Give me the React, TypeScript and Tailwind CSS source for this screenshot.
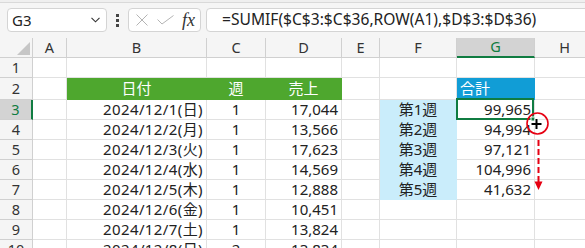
import React from "react";

const W = ["w-[33px]", "w-[34px]", "w-[140px]", "w-[59px]", "w-[76px]", "w-[38px]", "w-[77px]", "w-[78px]", "w-[60px]"];

type C = { t?: string; a?: "l" | "c" | "r"; cls?: string; x?: string };

const rows: { n: number; h: string; cells: C[] }[] = [
  { n: 1, h: "h-[20px]", cells: [{}, {}, {}, {}, {}, {}, {}, {}] },
  {
    n: 2,
    h: "h-[22px]",
    cells: [
      {},
      { t: "日付", a: "c", cls: "bg-[#4ea72e] border-[#4ea72e] text-white" },
      { t: "週", a: "c", cls: "bg-[#4ea72e] border-[#4ea72e] text-white" },
      { t: "売上", a: "c", cls: "bg-[#4ea72e] border-[#4ea72e] text-white" },
      {},
      {},
      { t: "合計", a: "l", cls: "bg-[#119dd6] border-[#119dd6] text-white" },
      {},
    ],
  },
  ...[
    ["2024/12/1(日)", "1", "17,044", "第1週", "99,965"],
    ["2024/12/2(月)", "1", "13,566", "第2週", "94,994"],
    ["2024/12/3(火)", "1", "17,623", "第3週", "97,121"],
    ["2024/12/4(水)", "1", "14,569", "第4週", "104,996"],
    ["2024/12/5(木)", "1", "12,888", "第5週", "41,632"],
    ["2024/12/6(金)", "1", "10,451", "", ""],
    ["2024/12/7(土)", "1", "13,824", "", ""],
    ["2024/12/8(日)", "2", "13,834", "", ""],
  ].map((r, i) => ({
    n: i + 3,
    h: "h-[20px]",
    cells: [
      {},
      { t: r[0], a: "r" as const, x: "tracking-[0.4px]" },
      { t: r[1], a: "c" as const },
      { t: r[2], a: "r" as const },
      {},
      r[3]
        ? { t: r[3], a: "c" as const, cls: "bg-[#caedfb] border-[#caedfb] text-[#222]" }
        : {},
      { t: r[4], a: "r" as const },
      {},
    ],
  })),
];

const cols = ["A", "B", "C", "D", "E", "F", "G", "H"];

export default function App() {
  return (
    <div className="relative w-[585px] h-[248px] overflow-hidden bg-[#f5f5f5] font-['Noto_Sans',sans-serif]">
      {/* formula bar */}
      <div className="h-[38px]">
        <div className="h-[3px] bg-[#efefef] border-b border-[#d9d9d9]" />
        <div className="flex items-center h-[24px] mt-[5px]">
          <div className="ml-[7px] w-[100px] h-[24px] shrink-0 rounded-[4px] border border-[#d4d4d4] bg-white flex items-center justify-between pl-[4px] pr-[6px]">
            <span className="text-[15px] text-[#222] leading-none">G3</span>
            <svg width="9" height="6" viewBox="0 0 9 6">
              <path d="M0.5 0.8 L4.5 4.8 L8.5 0.8" fill="none" stroke="#333" strokeWidth="1.1" />
            </svg>
          </div>
          <div className="w-[21px] shrink-0 flex flex-col items-center gap-[2px]">
            <span className="w-[3px] h-[3px] bg-[#444]" />
            <span className="w-[3px] h-[3px] bg-[#444]" />
            <span className="w-[3px] h-[3px] bg-[#444]" />
          </div>
          <div className="w-[73px] h-[24px] shrink-0 rounded-[4px] border border-[#d4d4d4] bg-white flex items-center pl-[7px]">
            <svg width="12" height="12" viewBox="0 0 12 12">
              <path d="M0.5 0.5 L11.5 11.5 M11.5 0.5 L0.5 11.5" stroke="#b4b4b4" strokeWidth="1" />
            </svg>
            <svg width="17" height="10" viewBox="0 0 17 10" className="ml-[9px]">
              <path d="M0.5 4.5 L5 9 L16.5 0.5" fill="none" stroke="#b4b4b4" strokeWidth="1" />
            </svg>
            <span className="ml-[8px] font-['Liberation_Serif',serif] italic text-[18px] leading-none text-[#333]">fx</span>
          </div>
          <div className="ml-[5px] flex-1 h-[24px] -mr-[10px] rounded-[4px] border border-[#d4d4d4] bg-white flex items-center pl-[15px]">
            <span className="text-[15.6px] text-[#222] leading-none whitespace-nowrap">=SUMIF($C$3:$C$36,ROW(A1),$D$3:$D$36)</span>
          </div>
        </div>
      </div>

      {/* sheet */}
      <div className="bg-white">
        <div className="flex h-[20px]">
          <div className={`${W[0]} shrink-0 relative bg-[#f5f5f5] border-r border-b border-[#d0d0d0]`}>
            <svg width="33" height="20" className="absolute left-0 top-0">
              <polygon points="17,17 30,17 30,4" fill="#c6c6c6" />
            </svg>
          </div>
          {cols.map((c, i) =>
            c === "G" ? (
              <div key={c} className={`${W[i + 1]} shrink-0 flex items-center justify-center bg-[#d3d3d3] border-r border-[#d0d0d0] border-b-2 border-b-[#107c41] text-[14.5px] text-[#107c41]`}>
                {c}
              </div>
            ) : (
              <div key={c} className={`${W[i + 1]} shrink-0 flex items-center justify-center bg-[#f5f5f5] border-r border-b border-[#d0d0d0] text-[14.5px] text-[#333]`}>
                {c}
              </div>
            )
          )}
        </div>
        {rows.map((r) => (
          <div key={r.n} className={`flex ${r.h}`}>
            {r.n === 3 ? (
              <div className={`${W[0]} shrink-0 flex items-center justify-center bg-[#d3d3d3] border-b border-[#d0d0d0] border-r-2 border-r-[#107c41] text-[14.5px] text-[#107c41]`}>
                {r.n}
              </div>
            ) : (
              <div className={`${W[0]} shrink-0 flex items-center justify-center bg-[#f5f5f5] border-r border-b border-[#d0d0d0] text-[14.5px] text-[#333]`}>
                {r.n}
              </div>
            )}
            {r.cells.map((c, i) => (
              <div
                key={i}
                className={`${W[i + 1]} shrink-0 flex items-center px-[3px] border-r border-b font-['Noto_Sans','Noto_Sans_CJK_JP',sans-serif] text-[15px] leading-none whitespace-nowrap ${
                  c.a === "r" ? "justify-end" : c.a === "c" ? "justify-center" : "justify-start"
                } ${c.cls ?? "border-[#e1e1e1] text-[#222]"} ${c.x ?? ""}`}
              >
                {c.t}
              </div>
            ))}
          </div>
        ))}
      </div>

      {/* overlay: selection, fill handle, cursor, arrow */}
      <svg width="585" height="248" className="absolute left-0 top-0 pointer-events-none">
        <rect x="457" y="99" width="76" height="20" fill="none" stroke="#107c41" strokeWidth="2" />
        <rect x="531" y="117" width="4" height="4" fill="#107c41" stroke="#fff" strokeWidth="1" />
        <circle cx="537.5" cy="123.5" r="10.5" fill="none" stroke="#e60012" strokeWidth="1.6" />
        <path d="M531 124 H542 M536.5 118.5 V129.5" stroke="#fff" strokeWidth="4" />
        <path d="M531.5 124 H541.5 M536.5 119 V129" stroke="#000" strokeWidth="2" />
        <path d="M538.5 140 V182" stroke="#e60012" strokeWidth="2" strokeDasharray="6 3" />
        <polygon points="534.5,181.5 542.5,181.5 538.5,190" fill="#e60012" />
      </svg>
    </div>
  );
}
